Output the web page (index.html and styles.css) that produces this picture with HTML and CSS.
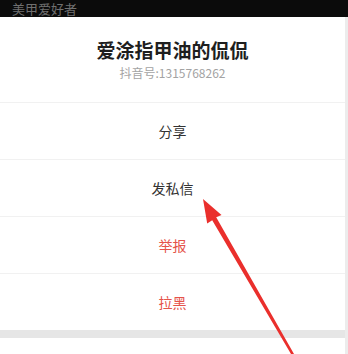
FILE: index.html
```html
<!DOCTYPE html>
<html lang="zh-CN">
<head>
    <meta charset="UTF-8">
    <meta name="viewport" content="width=device-width, initial-scale=1.0">
    <title>用户操作</title>
    <link rel="stylesheet" href="styles.css">
</head>
<body>

    <div class="top-bar">美甲爱好者</div>

    <div class="page">
        <div class="sheet">
            <div class="sheet-header">
                <h1 class="user-name">爱涂指甲油的侃侃</h1>
                <div class="user-id">抖音号:1315768262</div>
            </div>
            <ul class="actions">
                <li class="action">分享</li>
                <li class="action">发私信</li>
                <li class="action danger">举报</li>
                <li class="action danger">拉黑</li>
            </ul>
            <div class="gap"></div>
            <div class="cancel"></div>
        </div>
        <div class="side-strip"></div>
    </div>

    <!-- annotation arrow over the sheet -->
    <svg class="arrow" width="348" height="354" viewBox="0 0 348 354">
        <polygon fill="#ea2f2c" points="203,199 221.5,215 216.2,217.3 294,354 291,354 212.2,220.2 207.2,223.4"/>
    </svg>

</body>
</html>
```

FILE: styles.css
```css
* {
    margin: 0;
    padding: 0;
    box-sizing: border-box;
}

body {
    font-family: "Noto Sans CJK SC", "Noto Sans", sans-serif;
    background: #fff;
    width: 348px;
    height: 354px;
    overflow: hidden;
    position: relative;
}

.top-bar {
    height: 17px;
    background: #0b0b0b;
    padding-left: 12px;
    font-size: 13px;
    line-height: 17px;
    color: #6f6f6f;
}

.page {
    display: flex;
    height: 337px;
}

.sheet {
    width: 345px;
    background: #fff;
    border-top-right-radius: 5px;
    display: flex;
    flex-direction: column;
}

.side-strip {
    flex: 1;
    background: #ececec;
}

.sheet-header {
    height: 86px;
    display: flex;
    flex-direction: column;
    align-items: center;
    padding-top: 20px;
    border-bottom: 1px solid #f1f1f1;
}

.user-name {
    font-size: 19px;
    line-height: 26px;
    font-weight: 700;
    color: #1e1e1e;
}

.user-id {
    font-size: 12px;
    line-height: 16px;
    margin-top: 2px;
    color: #a3a3a3;
}

.actions {
    list-style: none;
}

.action {
    height: 57px;
    display: flex;
    justify-content: center;
    align-items: center;
    font-size: 14px;
    color: #333;
    border-bottom: 1px solid #f1f1f1;
}

.action:last-child {
    height: 56px;
    border-bottom: none;
}

.action.danger {
    color: #e5534a;
}

.gap {
    height: 8px;
    background: #e6e6e6;
}

.cancel {
    flex: 1;
    background: #fff;
}

.arrow {
    position: absolute;
    left: 0;
    top: 0;
    pointer-events: none;
}
```
